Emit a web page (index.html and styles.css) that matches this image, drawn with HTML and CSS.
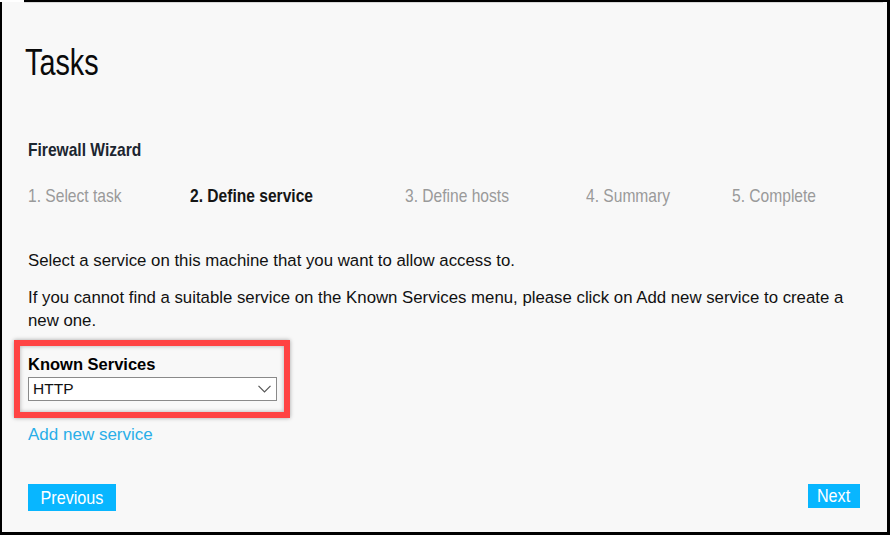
FILE: index.html
```html
<!DOCTYPE html>
<html lang="en">
<head>
<meta charset="utf-8">
<title>Tasks - Firewall Wizard</title>
<link rel="stylesheet" href="styles.css">
</head>
<body>
<div class="frame">
  <h1 class="title"><span class="narrow">Tasks</span></h1>
  <h2 class="wizard-name"><span class="narrow">Firewall Wizard</span></h2>
  <ol class="steps">
    <li class="step"><span class="narrow">1. Select task</span></li>
    <li class="step step-active"><span class="narrow">2. Define service</span></li>
    <li class="step"><span class="narrow">3. Define hosts</span></li>
    <li class="step"><span class="narrow">4. Summary</span></li>
    <li class="step"><span class="narrow">5. Complete</span></li>
  </ol>
  <p class="intro">Select a service on this machine that you want to allow access to.</p>
  <p class="hint">If you cannot find a suitable service on the Known Services menu, please click on Add new service to create a new one.</p>
  <div class="highlight">
    <label class="field-label">Known Services</label>
    <div class="select">
      <span class="select-value">HTTP</span>
      <svg class="chevron" width="13" height="8" viewBox="0 0 13 8"><polyline points="0.5,0.8 6.5,6.8 12.5,0.8" fill="none" stroke="#555" stroke-width="1.2"/></svg>
    </div>
  </div>
  <a class="add-link" href="#">Add new service</a>
  <div class="actions">
    <button class="btn btn-prev"><span class="btn-text">Previous</span></button>
    <button class="btn btn-next"><span class="btn-text">Next</span></button>
  </div>
</div>
</body>
</html>
```

FILE: styles.css
```css
html, body {
  margin: 0;
  padding: 0;
  background: #ffffff;
}

.frame {
  position: relative;
  box-sizing: border-box;
  width: 890px;
  height: 535px;
  background: #f8f8f8;
  border-left: 2px solid #000;
  border-top: 2px solid #000;
  border-right: 3px solid #000;
  border-bottom: 3px solid #000;
  padding: 0 27px 21px 26px;
  display: flex;
  flex-direction: column;
  font-family: "Liberation Sans", Arial, sans-serif;
  color: #111;
}

.frame::before {
  content: "";
  position: absolute;
  left: -2px;
  top: -2px;
  width: 24px;
  height: 2px;
  background: #fff;
}

.frame::after {
  content: "";
  position: absolute;
  left: 22px;
  right: 4px;
  top: 0;
  height: 1px;
  background: #d8d8d8;
}

.narrow {
  display: inline-block;
  white-space: nowrap;
  transform: scaleX(0.82);
  transform-origin: 0 50%;
}

.title {
  margin: 41px 0 0 -3px;
  font-weight: normal;
  font-size: 36px;
  line-height: 40px;
  color: #0a0a0a;
}

.title .narrow {
  transform: scaleX(0.8);
}

.wizard-name {
  margin: 56px 0 0 0;
  font-weight: bold;
  font-size: 19px;
  line-height: 22px;
  color: #1c2630;
}

.steps {
  list-style: none;
  margin: 24px 0 0 0;
  padding: 0;
  display: grid;
  grid-template-columns: 162px 215px 181px 146px auto;
  font-size: 19px;
  line-height: 22px;
}

.step {
  color: #9a9a9a;
}

.step-active {
  color: #151515;
  font-weight: bold;
}

.intro {
  margin: 43px 0 0 0;
  font-size: 16.8px;
  line-height: 22px;
}

.hint {
  margin: 14px 0 0 0;
  font-size: 16.8px;
  line-height: 23px;
}

.highlight {
  box-sizing: border-box;
  width: 276px;
  margin: 8px 0 0 -14px;
  padding: 8px 7px 11px 8px;
  border: 6px solid #ff4343;
  box-shadow: 0 0 4px rgba(0, 0, 0, 0.35), inset 0 0 4px rgba(0, 0, 0, 0.3);
  display: flex;
  flex-direction: column;
}

.field-label {
  font-weight: bold;
  font-size: 16.5px;
  line-height: 20px;
  color: #000;
}

.select {
  margin-top: 3px;
  height: 24px;
  box-sizing: border-box;
  border: 1px solid #8a8a8a;
  background: #fff;
  display: flex;
  align-items: center;
  justify-content: space-between;
  padding: 0 5px 0 4px;
}

.select-value {
  font-size: 15.5px;
  color: #111;
}

.add-link {
  margin-top: 6px;
  align-self: flex-start;
  font-size: 17px;
  line-height: 22px;
  color: #29aee8;
  text-decoration: none;
}

.actions {
  margin-top: auto;
  display: flex;
  justify-content: space-between;
  align-items: flex-start;
}

.btn {
  border: none;
  background: #08b6ff;
  color: #fff;
  font-family: "Liberation Sans", Arial, sans-serif;
  font-size: 19px;
  padding: 0;
  margin: 0;
  display: flex;
  align-items: center;
  justify-content: center;
}

.btn-text {
  display: inline-block;
  transform: scaleX(0.85);
}

.btn-prev {
  width: 88px;
  height: 27px;
}

.btn-next {
  width: 52px;
  height: 24px;
  margin-bottom: 3px;
}
```
